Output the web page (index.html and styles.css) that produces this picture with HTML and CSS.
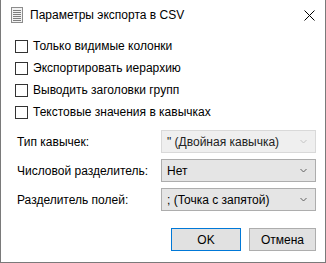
FILE: index.html
```html
<!DOCTYPE html>
<html lang="ru">

<head>
    <meta charset="UTF-8">
    <meta name="viewport" content="width=device-width, initial-scale=1.0">
    <title>Параметры экспорта в CSV</title>
    <link rel="stylesheet" href="styles.css">
</head>

<body>
    <div class="window">
        <div class="titlebar">
            <svg class="app-icon" width="12" height="16" viewBox="0 0 12 16">
                <rect x="0.5" y="0.5" width="11" height="15" fill="#f2f2f2" stroke="#8c8c8c"/>
                <path d="M2 3.5h8M2 5.5h8M2 7.5h8M2 9.5h8M2 11.5h8M2 13.5h8" stroke="#7d7d7d"/>
            </svg>
            <span class="title">Параметры экспорта в CSV</span>
            <svg class="close" width="11" height="11" viewBox="0 0 11 11">
                <path d="M0.5 0.5l10 10M10.5 0.5l-10 10" stroke="#000" stroke-width="1"/>
            </svg>
        </div>

        <div class="checks">
            <label class="check"><span class="box"></span>Только видимые колонки</label>
            <label class="check"><span class="box"></span>Экспортировать иерархию</label>
            <label class="check"><span class="box"></span>Выводить заголовки групп</label>
            <label class="check"><span class="box"></span>Текстовые значения в кавычках</label>
        </div>

        <div class="fields">
            <div class="field">
                <span class="field-label">Тип кавычек:</span>
                <div class="combo disabled">
                    <span>" (Двойная кавычка)</span>
                    <svg width="7" height="5" viewBox="0 0 7 5"><path d="M0.5 1l3 3 3-3" fill="none" stroke="#c4c4c4"/></svg>
                </div>
            </div>
            <div class="field">
                <span class="field-label">Числовой разделитель:</span>
                <div class="combo">
                    <span>Нет</span>
                    <svg width="7" height="5" viewBox="0 0 7 5"><path d="M0.5 1l3 3 3-3" fill="none" stroke="#606060"/></svg>
                </div>
            </div>
            <div class="field">
                <span class="field-label">Разделитель полей:</span>
                <div class="combo">
                    <span>; (Точка с запятой)</span>
                    <svg width="7" height="5" viewBox="0 0 7 5"><path d="M0.5 1l3 3 3-3" fill="none" stroke="#606060"/></svg>
                </div>
            </div>
        </div>

        <div class="buttons">
            <button class="btn default">OK</button>
            <button class="btn cancel">Отмена</button>
        </div>
    </div>
</body>

</html>
```

FILE: styles.css
```css
body {
    margin: 0;
    padding: 0;
    font-family: "Liberation Sans", Arial, sans-serif;
    font-size: 12px;
    color: #000;
    background: #fff;
}

.window {
    width: 326px;
    height: 263px;
    box-sizing: border-box;
    border: 1px solid #7a7a7a;
    border-top: none;
    background: #fff;
}

.titlebar {
    height: 30px;
    display: flex;
    align-items: center;
    padding-left: 10px;
    padding-right: 10px;
}

.app-icon {
    margin-right: 7px;
}

.title {
    flex: 1;
    font-size: 12px;
}

.close {
    margin-top: 1px;
}

.checks {
    padding-top: 5px;
    padding-left: 14px;
}

.check {
    display: flex;
    align-items: center;
    height: 22px;
}

.box {
    width: 11px;
    height: 11px;
    border: 1px solid #333;
    background: #fff;
    margin-right: 5px;
}

.fields {
    margin-top: 7px;
    padding-left: 16px;
    display: flex;
    flex-direction: column;
    gap: 6px;
}

.field {
    display: flex;
    align-items: center;
    height: 23px;
}

.field-label {
    width: 144px;
}

.combo {
    width: 155px;
    height: 23px;
    box-sizing: border-box;
    border: 1px solid #adadad;
    background: #e5e5e5;
    display: flex;
    align-items: center;
    justify-content: space-between;
    padding-left: 5px;
    padding-right: 8px;
}

.combo.disabled {
    background: #efefef;
    border-color: #d9d9d9;
    color: #222;
}

.buttons {
    margin-top: 17px;
    display: flex;
    justify-content: flex-end;
    gap: 8px;
    padding-right: 9px;
}

.btn {
    height: 23px;
    box-sizing: border-box;
    background: #e1e1e1;
    border: 1px solid #adadad;
    font-family: "Liberation Sans", Arial, sans-serif;
    font-size: 12px;
    color: #000;
    padding: 0;
}

.btn.default {
    width: 70px;
    border-color: #0078d7;
}

.btn.cancel {
    width: 67px;
}
```
